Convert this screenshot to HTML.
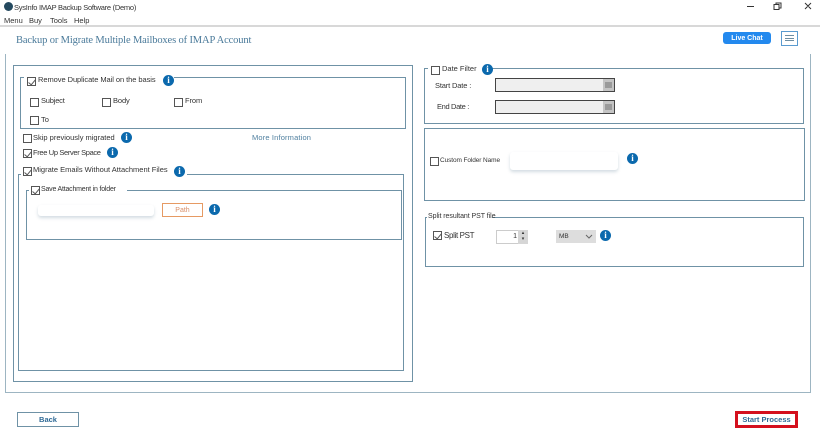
<!DOCTYPE html>
<html><head><meta charset="utf-8">
<style>
*{box-sizing:border-box}
html,body{margin:0;padding:0;width:820px;height:436px;overflow:hidden;background:#fff;font-family:"Liberation Sans",sans-serif;color:#333}
div,span,svg{position:absolute}
#p{left:0;top:0;width:820px;height:436px;background:#fff;filter:blur(.3px)}
.t{font-size:7.5px;letter-spacing:0;white-space:nowrap;color:#333;line-height:10px}
.b{border:1px solid #6f92a6}
.c{width:9px;height:9px;border:1px solid #555;background:#fff}
.c.k::after{content:"";position:absolute;left:2px;top:0;width:3px;height:6px;border:solid #555;border-width:0 1px 1px 0;transform:rotate(40deg)}
.i{width:11px;height:11px;border-radius:50%;background:#0b69ad;color:#fff;font:bold 9px/11px "Liberation Serif",serif;text-align:center}
.w{background:#fff}
.inp{background:#fff;border-radius:3px;box-shadow:0 2px 3px rgba(110,140,160,.3)}
.d{background:#efefef;border:1px solid #444;width:120px;height:14px}
.d::after{content:"";position:absolute;right:0;top:0;width:11px;height:12px;background:#c4c4c4}
.d::before{content:"";position:absolute;right:2px;top:3px;width:7px;height:6px;background:#9a9a9a;z-index:1}
</style></head><body><div id="p">
<div style="left:4px;top:2px;width:9px;height:9px;border-radius:50%;background:#24495f"></div>
<div class="t" style="left:14px;top:2.5px;letter-spacing:-.26px">SysInfo IMAP Backup Software (Demo)</div>
<div class="t" style="left:4px;top:15.5px">Menu</div>
<div class="t" style="left:29px;top:15.5px">Buy</div>
<div class="t" style="left:50px;top:15.5px">Tools</div>
<div class="t" style="left:74px;top:15.5px">Help</div>
<svg style="left:745px;top:0" width="70" height="14" fill="none" stroke="#333" stroke-width="1"><path d="M2 6.5h7M29 4.5h5v5h-5zM31 4.5v-1.5h5v5h-2M60 3l6 6M66 3l-6 6"/></svg>
<div style="left:0;top:25px;width:820px;height:2px;background:#d8d8d8"></div>
<div style="left:16px;top:35px;font:10.5px/12px 'Liberation Serif',serif;letter-spacing:-.14px;color:#4a7a9a;white-space:nowrap">Backup or Migrate Multiple Mailboxes of IMAP Account</div>
<div style="left:723px;top:32px;width:48px;height:12px;border-radius:3px;background:#2389ee;color:#fff;font:bold 7px/13px 'Liberation Sans',sans-serif;text-align:center">Live Chat</div>
<div style="left:781px;top:31px;width:17px;height:15px;border:1px solid #5a9bd0;background:#fff"></div>
<div style="left:785px;top:35px;width:9px;height:6px;border-top:1px solid #6d8ea3;border-bottom:1px solid #6d8ea3"></div>
<div style="left:785px;top:37.5px;width:9px;height:1px;background:#6d8ea3"></div>

<div class="b" style="left:5px;top:54px;width:806px;height:339px;border-top:0;border-color:#9db5c2"></div>
<div class="b" style="left:13px;top:65px;width:400px;height:317px"></div>
<div class="b" style="left:20px;top:77px;width:386px;height:52px"></div>
<div class="w" style="left:24px;top:72px;width:150px;height:12px"></div>
<div class="c k" style="left:27px;top:77px"></div>
<div class="t" style="left:38px;top:75px;letter-spacing:-.06px">Remove Duplicate Mail on the basis</div>
<div class="i" style="left:163px;top:75px">i</div>
<div class="c" style="left:30px;top:98px"></div><div class="t" style="left:41px;top:96px;letter-spacing:-.2px">Subject</div>
<div class="c" style="left:102px;top:98px"></div><div class="t" style="left:113px;top:96px;letter-spacing:-.1px">Body</div>
<div class="c" style="left:174px;top:98px"></div><div class="t" style="left:185px;top:96px;letter-spacing:-.1px">From</div>
<div class="c" style="left:30px;top:116px"></div><div class="t" style="left:41px;top:115px">To</div>
<div class="c" style="left:23px;top:134px"></div><div class="t" style="left:33px;top:133px">Skip previously migrated</div>
<div class="i" style="left:121px;top:132px">i</div>
<div class="t" style="left:252px;top:133px;letter-spacing:.15px;color:#4f7f9f">More Information</div>
<div class="c k" style="left:23px;top:149px"></div><div class="t" style="left:33px;top:148px;letter-spacing:-.35px">Free Up Server Space</div>
<div class="i" style="left:107px;top:147px">i</div>

<div class="b" style="left:18px;top:174px;width:386px;height:197px"></div>
<div class="w" style="left:21px;top:166px;width:166px;height:14px"></div>
<div class="c k" style="left:23px;top:167px"></div><div class="t" style="left:33px;top:165px">Migrate Emails Without Attachment Files</div>
<div class="i" style="left:174px;top:166px">i</div>
<div class="b" style="left:26px;top:190px;width:376px;height:50px"></div>
<div class="w" style="left:29px;top:185px;width:98px;height:12px"></div>
<div class="c k" style="left:31px;top:186px"></div><div class="t" style="left:41px;top:185px;font-size:7px;letter-spacing:-.2px">Save Attachment in folder</div>
<div class="inp" style="left:38px;top:205px;width:116px;height:11px"></div>
<div style="left:162px;top:203px;width:41px;height:14px;border:1px solid #e69a63;color:#d9906a;font-size:7px;line-height:13px;text-align:center">Path</div>
<div class="i" style="left:209px;top:204px">i</div>

<div class="b" style="left:424px;top:68px;width:380px;height:56px"></div>
<div class="w" style="left:428px;top:62px;width:64px;height:12px"></div>
<div class="c" style="left:431px;top:66px"></div><div class="t" style="left:442px;top:64px">Date Filter</div>
<div class="i" style="left:482px;top:64px">i</div>
<div class="t" style="left:435px;top:81px;letter-spacing:-.15px">Start Date :</div>
<div class="d" style="left:495px;top:78px"></div>
<div class="t" style="left:437px;top:102px;letter-spacing:-.35px">End Date :</div>
<div class="d" style="left:495px;top:100px"></div>
<div class="b" style="left:424px;top:128px;width:381px;height:73px"></div>
<div class="c" style="left:430px;top:157px"></div><div class="t" style="left:440px;top:156px;font-size:6.5px;letter-spacing:-.1px">Custom Folder Name</div>
<div class="inp" style="left:510px;top:152px;width:108px;height:18px"></div>
<div class="i" style="left:627px;top:153px">i</div>
<div class="b" style="left:425px;top:217px;width:379px;height:50px"></div>
<div class="w" style="left:427px;top:212px;width:65px;height:10px"></div>
<div class="t" style="left:428px;top:212px;font-size:7px;letter-spacing:-.05px">Split resultant PST file</div>
<div class="c k" style="left:433px;top:231px"></div><div class="t" style="left:444px;top:231px;font-size:8px;letter-spacing:-.35px">Split PST</div>
<div style="left:496px;top:230px;width:32px;height:14px;border:1px solid #ccc;background:#fff;font-size:7px;line-height:12px;text-align:right;padding-right:10px">1</div>
<div style="left:518px;top:230px;width:10px;height:14px;background:#d6d6d6;color:#333;font-size:5px;line-height:6px;text-align:center">▴<br>▾</div>
<div style="left:556px;top:230px;width:40px;height:13px;background:#ddd;font-size:6.5px;line-height:13px;padding-left:3px;color:#333">MB</div>
<svg style="left:585px;top:234px" width="8" height="6" fill="none" stroke="#666"><path d="M1 1l3 3 3-3"/></svg>
<div class="i" style="left:600px;top:230px">i</div>

<div style="left:17px;top:412px;width:62px;height:15px;border:1px solid #6f92a6;font:bold 7.5px/13px 'Liberation Sans',sans-serif;color:#2f6a96;text-align:center">Back</div>
<div style="left:735px;top:411px;width:63px;height:17px;border:3px solid #d4101e;font:bold 7.5px/11px 'Liberation Sans',sans-serif;color:#2f6a96;text-align:center;white-space:nowrap">Start Process</div>
</div></body></html>
